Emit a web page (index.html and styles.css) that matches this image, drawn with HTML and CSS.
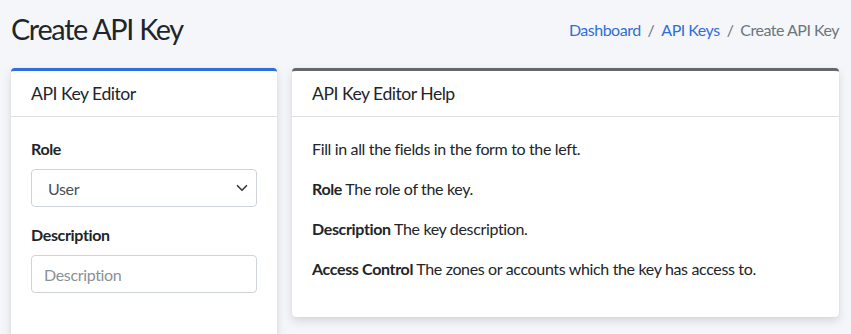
FILE: index.html
```html
<!DOCTYPE html>
<html lang="en">
<head>
<meta charset="utf-8">
<title>Create API Key</title>
<link rel="stylesheet" href="styles.css">
</head>
<body>

<div class="content-header">
  <h1>Create API Key</h1>
  <ol class="breadcrumb">
    <li><a href="#">Dashboard</a></li>
    <li class="sep">/</li>
    <li><a href="#">API Keys</a></li>
    <li class="sep">/</li>
    <li class="active">Create API Key</li>
  </ol>
</div>

<div class="content">
  <div class="card card-primary editor">
    <div class="card-header"><h3 class="card-title">API Key Editor</h3></div>
    <div class="card-body">
      <div class="form-group">
        <label for="role">Role</label>
        <div class="select-wrap">
          <select id="role" class="form-control">
            <option>User</option>
            <option>Admin</option>
          </select>
          <svg class="chevron" width="12" height="12" viewBox="0 0 16 16"><path d="M2 5l6 6 6-6" fill="none" stroke="#343a40" stroke-width="2.2" stroke-linecap="round" stroke-linejoin="round"/></svg>
        </div>
      </div>
      <div class="form-group">
        <label for="description">Description</label>
        <input type="text" id="description" class="form-control" placeholder="Description">
      </div>
    </div>
  </div>

  <div class="card card-secondary help">
    <div class="card-header"><h3 class="card-title">API Key Editor Help</h3></div>
    <div class="card-body">
      <p>Fill in all the fields in the form to the left.</p>
      <p><b>Role</b> The role of the key.</p>
      <p><b>Description</b> The key description.</p>
      <p><b>Access Control</b> The zones or accounts which the key has access to.</p>
    </div>
  </div>
</div>

</body>
</html>
```

FILE: styles.css
```css
  body {
    margin: 0;
    background-color: #f4f6f9;
    font-family: Lato, "Liberation Sans", sans-serif;
    font-size: 16px;
    line-height: 1.5;
    letter-spacing: -0.35px;
    color: #212529;
    overflow: hidden;
  }
  .content-header {
    display: flex;
    justify-content: space-between;
    align-items: center;
    padding: 9px 12px 0 11px;
    height: 50px;
    box-sizing: border-box;
  }
  .content-header h1 {
    margin: 0;
    font-size: 28.8px;
    font-weight: 400;
    line-height: 1.2;
    letter-spacing: -1.3px;
  }
  .breadcrumb {
    display: flex;
    list-style: none;
    margin: 0;
    padding: 0;
    letter-spacing: -0.5px;
  }
  .breadcrumb li.sep {
    padding: 0 7px;
    color: #6c757d;
  }
  .breadcrumb a {
    color: #2f6fd8;
    text-decoration: none;
  }
  .breadcrumb .active {
    color: #6c757d;
  }
  .content {
    display: grid;
    grid-template-columns: 266px 1fr;
    gap: 15px;
    align-items: start;
    padding: 18px 12px 0 11px;
  }
  .card {
    background: #fff;
    border-radius: 4px;
    box-shadow: 0 0 1px rgba(0,0,0,.125), 0 4px 10px rgba(0,0,0,.13);
  }
  .card-primary {
    border-top: 3px solid #2f6fd8;
  }
  .card-secondary {
    border-top: 3px solid #62676b;
  }
  .card-header {
    padding: 12px 20px;
    border-bottom: 1px solid rgba(0,0,0,.125);
  }
  .card-title {
    margin: 0;
    font-size: 17.6px;
    font-weight: 400;
    line-height: 1.2;
    letter-spacing: -0.5px;
  }
  .card-body {
    padding: 20px;
  }
  .editor .card-body {
    min-height: 230px;
  }
  .help p {
    margin: 0 0 16px 0;
  }
  .form-group {
    margin-bottom: 16px;
  }
  .form-group label {
    display: block;
    font-weight: 700;
    margin-bottom: 8px;
  }
  .form-control {
    display: block;
    width: 100%;
    height: 38px;
    box-sizing: border-box;
    padding: 6px 12px;
    font-family: inherit;
    font-size: 16px;
    letter-spacing: -0.35px;
    color: #495057;
    background: #fff;
    border: 1px solid #ced4da;
    border-radius: 4px;
  }
  .form-control::placeholder {
    color: #8a9197;
  }
  .select-wrap {
    position: relative;
  }
  select.form-control {
    appearance: none;
    -webkit-appearance: none;
    padding-left: 16px;
  }
  .chevron {
    position: absolute;
    right: 9px;
    top: 13px;
    pointer-events: none;
  }
```
